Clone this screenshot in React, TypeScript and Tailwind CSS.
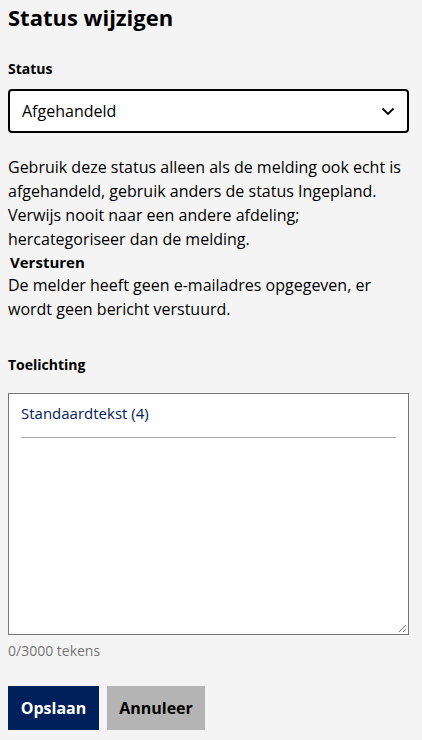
import React from "react";

export default function App() {
  return (
    <div className="min-h-[740px] w-[422px] bg-[#f4f4f4] px-2 text-black" style={{ fontFamily: '"Open Sans", sans-serif' }}>
      <h1 className="pt-[3px] text-[22px] font-bold leading-[28px]">Status wijzigen</h1>
      <div className="mt-[28px] text-[14px] font-bold leading-[20px]">Status</div>
      <div className="mt-[10px] flex h-[44px] w-[401px] items-center justify-between rounded-[4px] border-2 border-black bg-white pl-[12px] pr-[12px]">
        <span className="text-[16px] leading-[20px]">Afgehandeld</span>
        <svg width="14" height="9" viewBox="0 0 14 9" fill="none">
          <path d="M1.5 1.5L7 7L12.5 1.5" stroke="#000" strokeWidth="1.8" />
        </svg>
      </div>
      <p className="mt-[22px] text-[16px] leading-[24px]">
        Gebruik deze status alleen als de melding ook echt is afgehandeld, gebruik anders de status Ingepland. Verwijs nooit naar een andere afdeling; hercategoriseer dan de melding.
      </p>
      <div className="pl-[2px] text-[15px] font-bold leading-[22px]">Versturen</div>
      <p className="text-[16px] leading-[24px]">De melder heeft geen e-mailadres opgegeven, er wordt geen bericht verstuurd.</p>
      <div className="mt-[34px] text-[14px] font-bold leading-[20px]">Toelichting</div>
      <div className="mt-[18px] flex h-[242px] w-[401px] flex-col border border-[#767676] bg-white">
        <div className="mx-[12px] border-b border-[#a8a8a8] pb-[12px] pt-[7px]">
          <span className="text-[15px] leading-[22px] text-[#00205b]">Standaardtekst (4)</span>
        </div>
        <div className="relative flex-1">
          <svg className="absolute bottom-[1px] right-[1px]" width="10" height="10" viewBox="0 0 10 10">
            <path d="M9 2L2 9M9 6L6 9" stroke="#777" strokeWidth="1" />
          </svg>
        </div>
      </div>
      <div className="mt-[6px] text-[14px] leading-[20px] text-[#767676]">0/3000 tekens</div>
      <div className="mt-[25px] flex gap-[8px]">
        <button className="h-[44px] w-[91px] bg-[#00205b] text-[16px] font-bold text-white">Opslaan</button>
        <button className="h-[44px] w-[98px] bg-[#b4b4b4] text-[16px] font-bold text-black">Annuleer</button>
      </div>
    </div>
  );
}
